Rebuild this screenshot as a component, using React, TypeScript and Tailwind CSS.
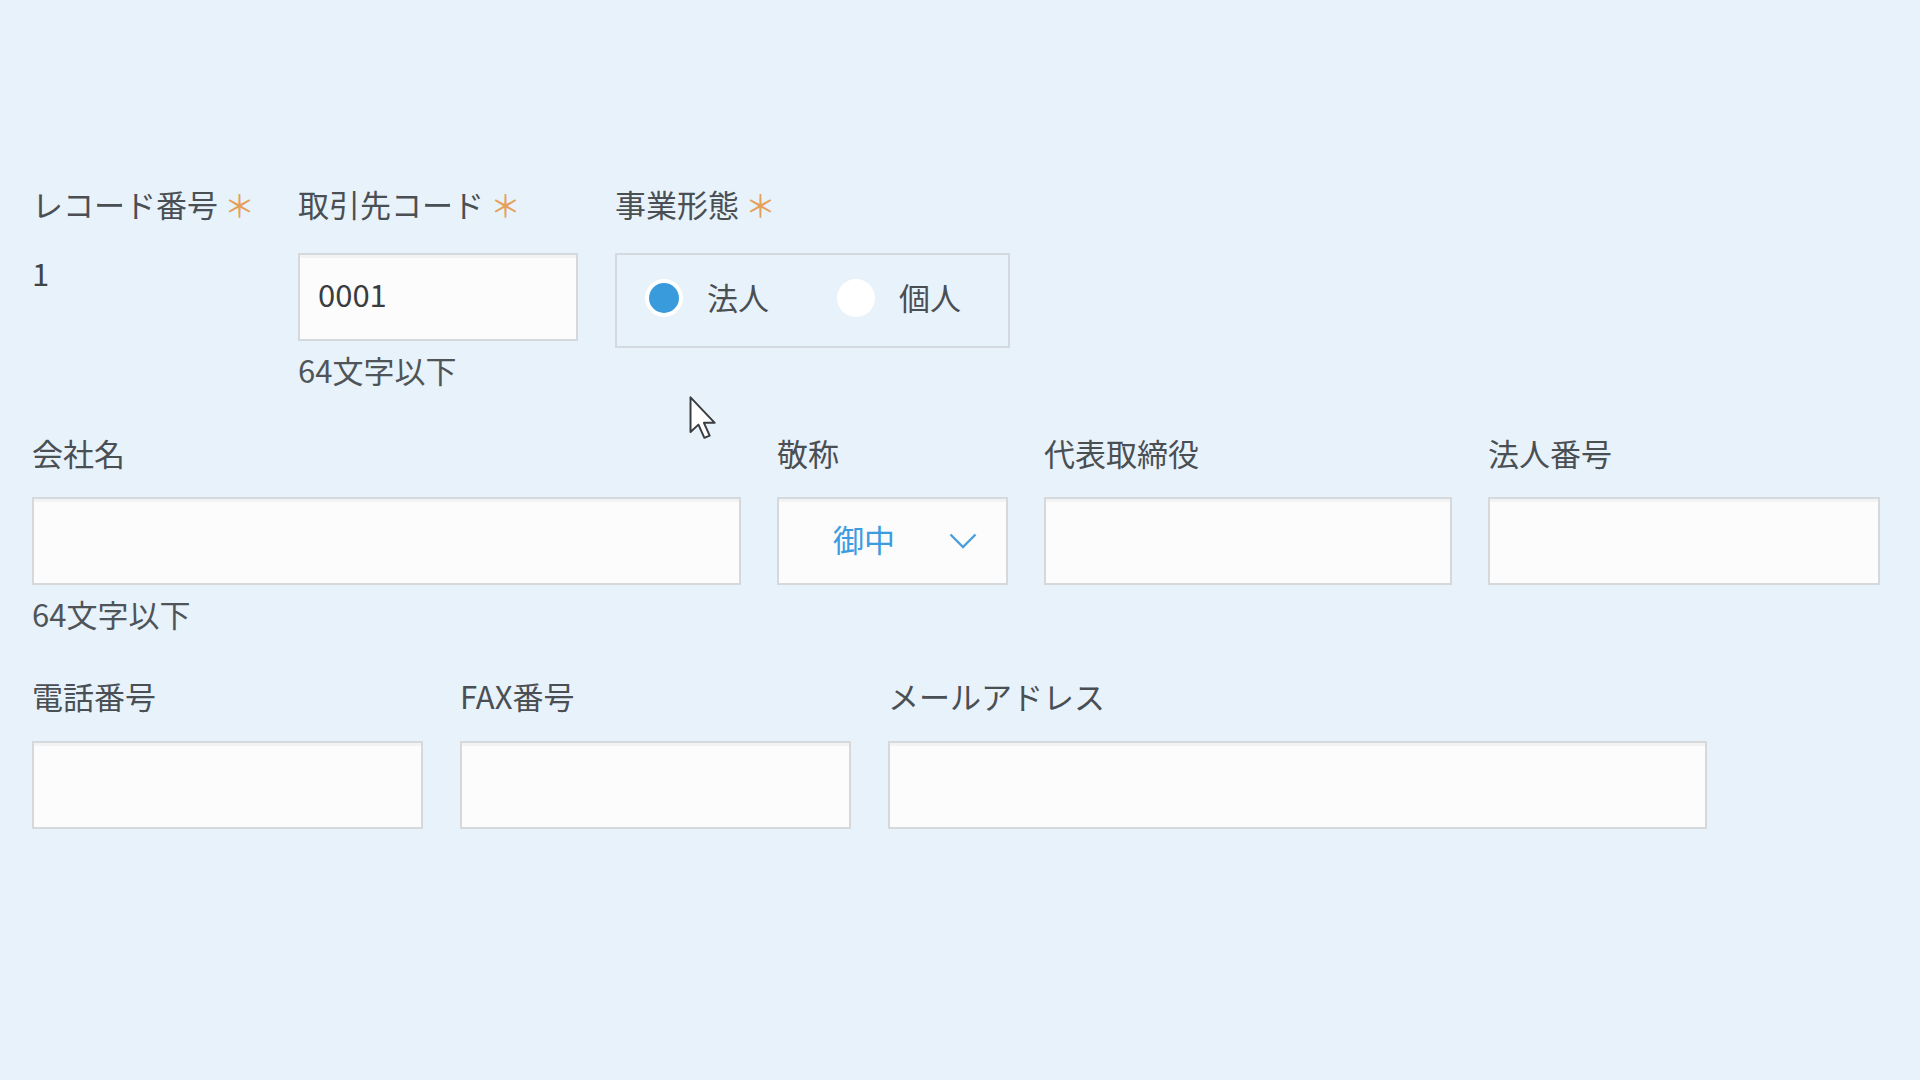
import type { ReactNode } from 'react';

function Label({ text, required }: { text: string; required?: boolean }) {
  return (
    <div className="flex h-[40px] items-center whitespace-nowrap text-[31px] leading-[40px] text-[#4a4f54]">
      {text}
      {required && <span className="ml-[6px] text-[#e5a05b]">＊</span>}
    </div>
  );
}

function Hint({ children }: { children: ReactNode }) {
  return <div className="mt-[9px] h-[40px] whitespace-nowrap text-[31px] leading-[40px] text-[#4f5458]">{children}</div>;
}

function TextBox({ value, className = '' }: { value?: string; className?: string }) {
  return (
    <div
      className={`flex h-[88px] items-center border-2 border-[#d5d9dc] bg-[#fcfcfc] pb-[5px] pl-[18px] text-[31px] text-[#3a3d40] shadow-[inset_0_3px_0_#f2f3f4] ${className}`}
    >
      {value}
    </div>
  );
}

function Radio({ checked, label }: { checked?: boolean; label: string }) {
  return (
    <div className="flex items-center gap-[24px]">
      <span className="flex h-[38px] w-[38px] items-center justify-center rounded-full bg-white">
        {checked && <span className="h-[30px] w-[30px] rounded-full bg-[#3a9bdc]" />}
      </span>
      <span className="pb-[2px] text-[31px] leading-[40px] text-[#4a4f54]">{label}</span>
    </div>
  );
}

export default function App() {
  return (
    <div className="relative min-h-screen w-full bg-[#e8f2fa] font-['Noto_Sans_CJK_JP',sans-serif]">
      <div className="flex flex-col pl-[32px] pt-[184px]">
        {/* row 1 */}
        <div className="flex items-start gap-[37px]">
          <div className="w-[229px]">
            <Label text="レコード番号" required />
            <div className="mt-[29px] text-[31px] leading-[40px] text-[#414447]">1</div>
          </div>
          <div className="w-[280px]">
            <Label text="取引先コード" required />
            <TextBox value="0001" className="mt-[29px] h-[87px]" />
            <Hint>64文字以下</Hint>
          </div>
          <div className="w-[395px]">
            <Label text="事業形態" required />
            <div className="mt-[29px] flex h-[95px] items-center gap-[68px] border-2 border-[#d3d9de] pb-[5px] pl-[28px]">
              <Radio checked label="法人" />
              <Radio label="個人" />
            </div>
          </div>
        </div>

        {/* row 2 */}
        <div className="mt-[43px] flex items-start gap-[36px]">
          <div className="w-[709px]">
            <Label text="会社名" />
            <TextBox className="mt-[24px]" />
            <Hint>64文字以下</Hint>
          </div>
          <div className="w-[231px]">
            <Label text="敬称" />
            <div className="mt-[24px] flex h-[88px] items-center justify-between border-2 border-[#d5d9dc] bg-[#fcfcfc] pl-[54px] pr-[29px] shadow-[inset_0_3px_0_#f2f3f4]">
              <span className="pb-[3px] text-[31px] text-[#3d9be0]">御中</span>
              <svg width="28" height="16" viewBox="0 0 28 16" fill="none">
                <path d="M1.5 1.5 L14 14 L26.5 1.5" stroke="#4a9fdc" strokeWidth="2.4" />
              </svg>
            </div>
          </div>
          <div className="w-[408px]">
            <Label text="代表取締役" />
            <TextBox className="mt-[24px]" />
          </div>
          <div className="w-[392px]">
            <Label text="法人番号" />
            <TextBox className="mt-[24px]" />
          </div>
        </div>

        {/* row 3 */}
        <div className="mt-[42px] flex items-start gap-[37px]">
          <div className="w-[391px]">
            <Label text="電話番号" />
            <TextBox className="mt-[25px]" />
          </div>
          <div className="w-[391px]">
            <Label text="FAX番号" />
            <TextBox className="mt-[25px]" />
          </div>
          <div className="w-[819px]">
            <Label text="メールアドレス" />
            <TextBox className="mt-[25px]" />
          </div>
        </div>
      </div>

      {/* mouse pointer */}
      <svg className="absolute left-[689px] top-[396px]" width="29" height="44" viewBox="0 0 13 20" fill="none">
        <path
          d="M0.6 0.6 L0.6 16.4 L4.2 13 L6.9 19 L9.3 18 L6.7 12.2 L11.6 12.2 Z"
          fill="#ffffff"
          stroke="#3a3d40"
          strokeWidth="0.9"
          strokeLinejoin="round"
        />
      </svg>
    </div>
  );
}
